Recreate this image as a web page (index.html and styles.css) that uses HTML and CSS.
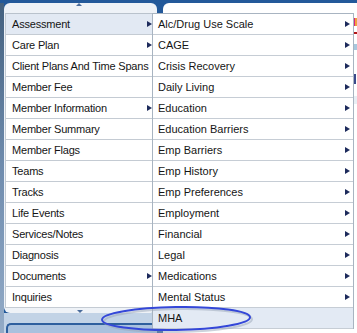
FILE: index.html
```html
<!DOCTYPE html>
<html>
<head>
<meta charset="utf-8">
<link rel="stylesheet" href="styles.css">
</head>
<body>
<div class="screen">
  <div class="edge"></div>
  <div class="left-col">
    <div class="nav-panel">
      <div class="scroll scroll-up"><span class="tri-up"></span></div>
      <ul class="menu">
        <li class="item sub active">Assessment</li>
        <li class="item sub">Care Plan</li>
        <li class="item">Client Plans And Time Spans</li>
        <li class="item">Member Fee</li>
        <li class="item sub">Member Information</li>
        <li class="item">Member Summary</li>
        <li class="item">Member Flags</li>
        <li class="item">Teams</li>
        <li class="item">Tracks</li>
        <li class="item">Life Events</li>
        <li class="item">Services/Notes</li>
        <li class="item">Diagnosis</li>
        <li class="item sub">Documents</li>
        <li class="item last">Inquiries</li>
      </ul>
      <div class="scroll scroll-down"><span class="tri-down"></span></div>
    </div>
    <div class="below">
      <div class="tabbar"></div>
    </div>
  </div>
  <div class="gap"></div>
  <div class="right-panel">
    <div class="bits">
      <span class="bit b1"></span>
      <span class="bit b2"></span>
      <span class="bit b3"></span>
      <span class="bit b4"></span>
      <span class="bit b5"></span>
    </div>
  </div>

  <ul class="submenu">
    <li class="sitem sub">Alc/Drug Use Scale</li>
    <li class="sitem sub">CAGE</li>
    <li class="sitem sub">Crisis Recovery</li>
    <li class="sitem sub">Daily Living</li>
    <li class="sitem sub">Education</li>
    <li class="sitem sub">Education Barriers</li>
    <li class="sitem sub">Emp Barriers</li>
    <li class="sitem sub">Emp History</li>
    <li class="sitem sub">Emp Preferences</li>
    <li class="sitem sub">Employment</li>
    <li class="sitem sub">Financial</li>
    <li class="sitem sub">Legal</li>
    <li class="sitem sub">Medications</li>
    <li class="sitem sub">Mental Status</li>
    <li class="sitem active">MHA</li>
  </ul>

  <svg class="circle" width="164" height="36" viewBox="0 0 164 36">
    <ellipse cx="80" cy="19.5" rx="74" ry="11.5" fill="none" stroke="#9aa6b8" stroke-width="2" opacity="0.5" transform="rotate(-1 80 19)"/>
    <ellipse cx="78" cy="17.5" rx="74" ry="11.5" fill="none" stroke="#3447d8" stroke-width="2" transform="rotate(-1 78 17)"/>
  </svg>
</div>
</body>
</html>
```

FILE: styles.css
```css
* { box-sizing: border-box; }
html, body { margin: 0; padding: 0; }
body {
  font-family: "Liberation Sans", Arial, sans-serif;
  font-size: 11px;
  color: #151515;
  background: #ffffff;
}
.screen {
  position: relative;
  width: 357px;
  height: 333px;
  overflow: hidden;
  background: #23599a;
  display: flex;
  padding-top: 3px;
}
.edge {
  width: 4px;
  flex: none;
  background: linear-gradient(to bottom, #44617f, #6f8cae 50%, #93abc7);
}
.left-col {
  width: 153px;
  flex: none;
  display: flex;
  flex-direction: column;
}
.nav-panel {
  background: #eef2f7;
  border-radius: 6px;
  height: 313px;
  display: flex;
  flex-direction: column;
}
.scroll {
  display: flex;
  justify-content: center;
}
.scroll-up {
  height: 10px;
}
.scroll-down {
  flex: 1;
  padding-top: 2px;
}
.tri-up {
  width: 0; height: 0;
  border-left: 3px solid transparent;
  border-right: 3px solid transparent;
  border-bottom: 3px solid #4a6c9c;
  margin-right: 4px;
}
.tri-down {
  width: 0; height: 0;
  border-left: 3px solid transparent;
  border-right: 3px solid transparent;
  border-top: 3px solid #4a6c9c;
  margin-right: 2px;
}
.menu {
  list-style: none;
  margin: 0 0 0 1px;
  padding: 0;
  background: #ffffff;
  border-top: 1px solid #b9c2cc;
  border-left: 1px solid #c2cad3;
}
.item {
  height: 21px;
  line-height: 21px;
  padding: 0 5px 0 6px;
  border-bottom: 1px solid #c4cbd3;
  display: flex;
  align-items: center;
  justify-content: space-between;
  white-space: nowrap;
  letter-spacing: -0.2px;
}
.item.active { background: #e2e9f3; }
.item.sub::after,
.sitem.sub::after {
  content: "";
  flex: none;
  width: 0; height: 0;
  border-left: 5px solid #1d2b5c;
  border-top: 3.5px solid transparent;
  border-bottom: 3.5px solid transparent;
}
.below {
  flex: 1;
  background: #c2d3e6;
  padding-top: 10px;
  padding-left: 2px;
}
.tabbar {
  height: 12px;
  border-top: 2px solid #2e5f9e;
  border-left: 2px solid #2e5f9e;
  border-radius: 5px 0 0 0;
  background: #a9c1de;
}
.gap { width: 6px; flex: none; }
.right-panel {
  flex: 1;
  background: #ffffff;
  border-radius: 6px 0 0 0;
}
.bits {
  margin-left: 191px;
  padding-top: 14px;
  display: flex;
  flex-direction: column;
}
.bit { display: block; width: 3px; }
.b1 { height: 8px; background: linear-gradient(to right, #d8247a 1px, #f0a040 1px); margin-top: 1px; }
.b2 { height: 2px; background: #b01818; margin-top: 6px; }
.b3 { height: 6px; background: #a8c8de; margin-top: 10px; }
.b4 { height: 10px; background: #3a4a8a; margin-top: 24px; width: 2px; }
.b5 { height: 8px; background: #e8eef4; margin-top: 12px; }

.submenu {
  position: absolute;
  left: 152px;
  top: 13px;
  width: 202px;
  margin: 0;
  padding: 0;
  list-style: none;
  background: #ffffff;
  border: 1px solid #a8b4c1;
  border-bottom: none;
}
.sitem {
  height: 21px;
  line-height: 21px;
  padding: 0 3px 0 5px;
  border-bottom: 1px solid #c6cdd5;
  display: flex;
  align-items: center;
  justify-content: space-between;
  white-space: nowrap;
}
.sitem.active { background: #e3eaf4; }
.circle {
  position: absolute;
  left: 98px;
  top: 301px;
}
```
